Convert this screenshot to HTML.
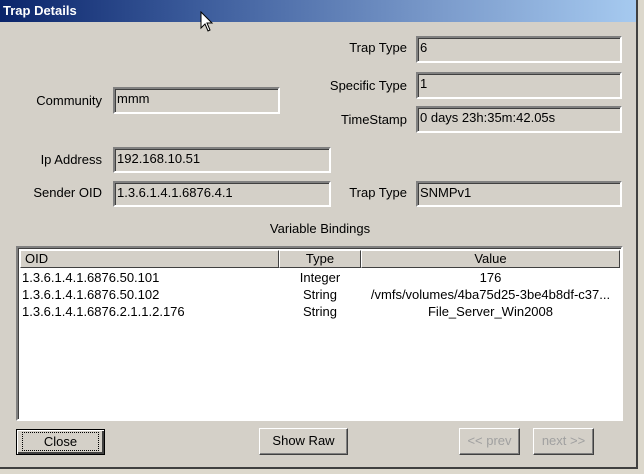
<!DOCTYPE html>
<html><head><style>
body{margin:0;width:644px;height:474px;background:#dcd8cc;position:relative;overflow:hidden;font-family:"Liberation Sans",sans-serif;font-size:13px;color:#000}
.win{position:absolute;left:0;top:0;width:636px;height:467px;background:#d4d0c8;border-right:2px solid #404040;border-bottom:2px solid #404040}
.title{position:absolute;left:0;top:0;width:636px;height:22px;background:linear-gradient(90deg,#0a246a 0%,#3a5a9a 30%,#7c9ccc 70%,#a6caf0 100%);color:#fff;font-weight:bold;font-size:13px;line-height:21px;padding-left:3px;box-sizing:border-box}
.f{position:absolute;box-sizing:border-box;border:2px solid;border-color:#808080 #fff #fff #808080;box-shadow:inset 1px 1px 0 #404040;line-height:20px;padding-left:2px;white-space:nowrap}
.l{position:absolute;text-align:right;white-space:nowrap}
.btn{position:absolute;box-sizing:border-box;border:1px solid;border-color:#fff #404040 #404040 #fff;box-shadow:inset -1px -1px 0 #808080;text-align:center;line-height:24px}
.list{position:absolute;left:16px;top:246px;width:607px;height:175px;background:#fff;box-sizing:border-box;border:2px solid;border-color:#808080 #fff #fff #808080;box-shadow:inset 1px 1px 0 #404040}
.h{position:absolute;top:2px;height:18px;background:#d4d0c8;box-sizing:border-box;border:1px solid;border-color:#fff #404040 #404040 #fff;line-height:16px}
.r{position:absolute;white-space:nowrap;line-height:17px}
</style></head><body>
<div class="win">
<div class="title">Trap Details</div>
<svg style="position:absolute;left:200px;top:11px" width="14" height="24" viewBox="0 0 14 24"><path d="M1 1 L1 17 L5 13 L8 20 L10 19 L7 12 L12 12 Z" fill="#fff" stroke="#000"/></svg>
<div class="l" style="right:229px;top:40px">Trap Type</div>
<div class="f" style="left:416px;top:36px;width:206px;height:27px">6</div>
<div class="l" style="right:229px;top:78px">Specific Type</div>
<div class="f" style="left:416px;top:72px;width:206px;height:27px">1</div>
<div class="l" style="right:229px;top:112px">TimeStamp</div>
<div class="f" style="left:416px;top:106px;width:206px;height:27px">0 days 23h:35m:42.05s</div>
<div class="l" style="right:534px;top:93px">Community</div>
<div class="f" style="left:113px;top:87px;width:167px;height:27px">mmm</div>
<div class="l" style="right:534px;top:152px">Ip Address</div>
<div class="f" style="left:113px;top:147px;width:218px;height:26px">192.168.10.51</div>
<div class="l" style="right:534px;top:185px">Sender OID</div>
<div class="f" style="left:113px;top:181px;width:218px;height:26px">1.3.6.1.4.1.6876.4.1</div>
<div class="l" style="right:229px;top:185px">Trap Type</div>
<div class="f" style="left:416px;top:181px;width:206px;height:26px">SNMPv1</div>
<div class="l" style="left:0;width:640px;text-align:center;top:221px">Variable Bindings</div>
<div class="list">
<div class="h" style="left:2px;width:259px;padding-left:4px">OID</div>
<div class="h" style="left:261px;width:82px;text-align:center">Type</div>
<div class="h" style="left:343px;width:259px;text-align:center">Value</div>
<div class="r" style="left:4px;top:21px">1.3.6.1.4.1.6876.50.101</div>
<div class="r" style="left:261px;width:82px;text-align:center;top:21px">Integer</div>
<div class="r" style="left:343px;width:259px;text-align:center;top:21px">176</div>
<div class="r" style="left:4px;top:38px">1.3.6.1.4.1.6876.50.102</div>
<div class="r" style="left:261px;width:82px;text-align:center;top:38px">String</div>
<div class="r" style="left:343px;width:259px;text-align:center;top:38px">/vmfs/volumes/4ba75d25-3be4b8df-c37...</div>
<div class="r" style="left:4px;top:55px">1.3.6.1.4.1.6876.2.1.1.2.176</div>
<div class="r" style="left:261px;width:82px;text-align:center;top:55px">String</div>
<div class="r" style="left:343px;width:259px;text-align:center;top:55px">File_Server_Win2008</div>
</div>
<div class="btn" style="left:16px;top:429px;width:89px;height:26px;border:1px solid #000;box-shadow:inset 1px 1px 0 #fff,inset -2px -2px 0 #404040"><span style="outline:1px dotted #000;outline-offset:1px;padding:0 20px">Close</span></div>
<div class="btn" style="left:259px;top:428px;width:89px;height:27px">Show Raw</div>
<div class="btn" style="left:459px;top:428px;width:61px;height:27px;color:#a0a0a0">&lt;&lt; prev</div>
<div class="btn" style="left:533px;top:428px;width:61px;height:27px;color:#a0a0a0">next &gt;&gt;</div>
</div>
</body></html>
